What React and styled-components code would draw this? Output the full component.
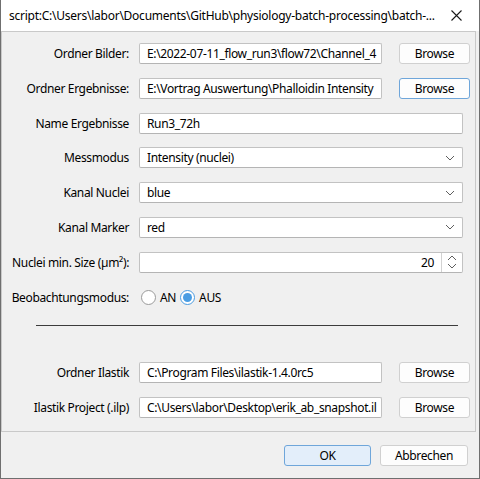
import React from "react";
import styled, { createGlobalStyle } from "styled-components";

const GlobalStyle = createGlobalStyle`
  body {
    margin: 0;
    background: #f0f0f0;
    font-family: "Noto Sans", "Open Sans", sans-serif;
    font-size: 12px;
    letter-spacing: -0.35px;
    color: #000;
  }
`;

const Window = styled.div`
  width: 480px;
  height: 479px;
  box-sizing: border-box;
  border: 1px solid #6f6f6f;
  border-top: none;
  background: #f0f0f0;
  display: flex;
  flex-direction: column;
`;

const TitleBar = styled.div`
  height: 31px;
  flex: none;
  background: #ffffff;
  display: flex;
  align-items: center;
  justify-content: space-between;
  padding-left: 8px;
`;

const Title = styled.span`
  font-size: 12px;
  white-space: nowrap;
  letter-spacing: -0.25px;
`;

const Close = styled.div`
  width: 46px;
  height: 31px;
  display: flex;
  align-items: center;
  justify-content: center;
  margin-right: 1px;
`;

const Panel = styled.div`
  flex: none;
  height: 401px;
  box-sizing: border-box;
  border: 1px solid #c9c9c9;
  margin-right: 3px;
  padding-top: 11px;
  display: flex;
  flex-direction: column;
  gap: 13.8px;
`;

const Row = styled.div`
  display: flex;
  align-items: center;
  height: 21px;
`;

const Label = styled.label`
  width: 127px;
  margin-right: 10px;
  text-align: right;
  white-space: nowrap;
`;

const Field = styled.div`
  width: ${(p) => p.$w}px;
  height: 21px;
  box-sizing: border-box;
  background: #ffffff;
  border: 1px solid #c2c2c2;
  border-bottom-color: #b4b4b4;
  border-radius: 2px;
  display: flex;
  align-items: center;
  padding-left: 7px;
  white-space: nowrap;
  overflow: hidden;
`;

const FieldText = styled.span`
  flex: 1;
  white-space: nowrap;
  overflow: hidden;
`;

const Chevron = styled.div`
  width: 20px;
  display: flex;
  justify-content: center;
  align-items: center;
  margin-right: 2px;
`;

const SpinText = styled.span`
  flex: 1;
  text-align: right;
  padding-right: 7px;
`;

const SpinButtons = styled.div`
  width: 20px;
  height: 100%;
  border-left: 1px solid #d2d2d2;
  display: flex;
  align-items: center;
  justify-content: center;
`;

const Button = styled.button`
  width: ${(p) => p.$w || 71}px;
  height: 21px;
  margin-left: ${(p) => p.$ml || 0}px;
  box-sizing: border-box;
  font-family: inherit;
  font-size: 12px;
  letter-spacing: inherit;
  color: #000;
  padding: 0;
  border-radius: 3px;
  background: ${(p) => (p.$default ? "#e3eefa" : "#fdfdfd")};
  border: 1px solid ${(p) => (p.$focus ? "#6fa6da" : "#d0d0d0")};
`;

const Radios = styled.div`
  display: flex;
  align-items: center;
  margin-left: 2px;
`;

const RadioItem = styled.span`
  display: flex;
  align-items: center;
  margin-right: 4px;
`;

const Circle = styled.span`
  width: 15px;
  height: 15px;
  box-sizing: border-box;
  border-radius: 50%;
  background: #fff;
  border: 1px solid ${(p) => (p.$on ? "#4a9be0" : "#9a9a9a")};
  display: flex;
  align-items: center;
  justify-content: center;
  margin-right: 4px;

  &::after {
    content: "";
    display: ${(p) => (p.$on ? "block" : "none")};
    width: 9px;
    height: 9px;
    border-radius: 50%;
    background: #4a9de3;
  }
`;

const Divider = styled.div`
  height: 1px;
  width: 422px;
  margin: 3.6px 0 22px 34px;
  background: #3c3c3c;
`;

const Footer = styled.div`
  flex: 1;
  display: flex;
  align-items: center;
  justify-content: flex-end;
  gap: 9px;
  padding-right: 11px;
`;

const Down = () => (
  <svg width="10" height="6" viewBox="0 0 10 6">
    <polyline points="1,1 5,5 9,1" fill="none" stroke="#5f5f5f" strokeWidth="1" />
  </svg>
);

const UpDown = () => (
  <svg width="10" height="14" viewBox="0 0 10 14">
    <polyline points="1,5 5,1 9,5" fill="none" stroke="#5f5f5f" strokeWidth="1" />
    <polyline points="1,9 5,13 9,9" fill="none" stroke="#5f5f5f" strokeWidth="1" />
  </svg>
);

function PathRow({ label, value, focus }) {
  return (
    <Row>
      <Label>{label}</Label>
      <Field $w={243}>
        <FieldText>{value}</FieldText>
      </Field>
      <Button $ml={17} $focus={focus}>Browse</Button>
    </Row>
  );
}

function ComboRow({ label, value }) {
  return (
    <Row>
      <Label>{label}</Label>
      <Field $w={324}>
        <FieldText>{value}</FieldText>
        <Chevron>
          <Down />
        </Chevron>
      </Field>
    </Row>
  );
}

export default function App() {
  return (
    <>
      <GlobalStyle />
      <Window>
        <TitleBar>
          <Title>
            script:C:\Users\labor\Documents\GitHub\physiology-batch-processing\batch-...
          </Title>
          <Close>
            <svg width="11" height="11" viewBox="0 0 11 11">
              <path d="M0.5 0.5 L10.5 10.5 M10.5 0.5 L0.5 10.5" stroke="#1a1a1a" strokeWidth="1.1" />
            </svg>
          </Close>
        </TitleBar>
        <Panel>
          <PathRow label="Ordner Bilder:" value="E:\2022-07-11_flow_run3\flow72\Channel_4" />
          <PathRow label="Ordner Ergebnisse:" value="E:\Vortrag Auswertung\Phalloidin Intensity" focus />
          <Row>
            <Label>Name Ergebnisse</Label>
            <Field $w={324}>
              <FieldText>Run3_72h</FieldText>
            </Field>
          </Row>
          <ComboRow label="Messmodus" value="Intensity (nuclei)" />
          <ComboRow label="Kanal Nuclei" value="blue" />
          <ComboRow label="Kanal Marker" value="red" />
          <Row>
            <Label>Nuclei min. Size (µm²):</Label>
            <Field $w={324}>
              <SpinText>20</SpinText>
              <SpinButtons>
                <UpDown />
              </SpinButtons>
            </Field>
          </Row>
          <Row>
            <Label>Beobachtungsmodus:</Label>
            <Radios>
              <RadioItem>
                <Circle />
                AN
              </RadioItem>
              <RadioItem>
                <Circle $on />
                AUS
              </RadioItem>
            </Radios>
          </Row>
          <Divider />
          <PathRow label="Ordner Ilastik" value="C:\Program Files\ilastik-1.4.0rc5" />
          <PathRow label="Ilastik Project (.ilp)" value="C:\Users\labor\Desktop\erik_ab_snapshot.il" />
        </Panel>
        <Footer>
          <Button $w={87} $default $focus>OK</Button>
          <Button $w={88}>Abbrechen</Button>
        </Footer>
      </Window>
    </>
  );
}
